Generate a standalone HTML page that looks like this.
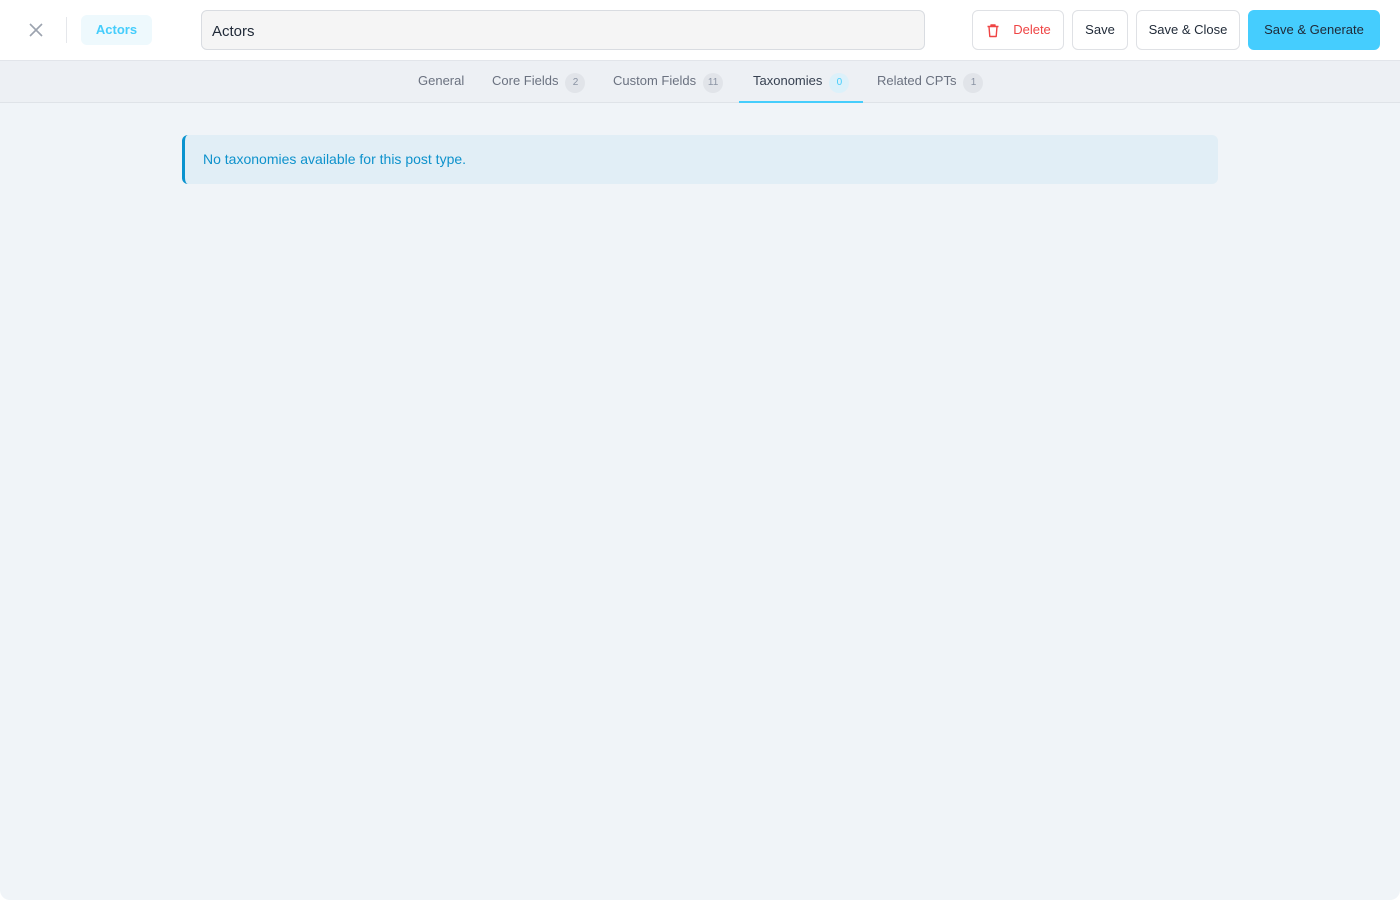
<!DOCTYPE html>
<html><head><meta charset="utf-8"><style>
*{box-sizing:border-box;margin:0;padding:0}
html,body{width:1400px;height:900px;background:#fff;font-family:"Liberation Sans",sans-serif;overflow:hidden}
.wrap{position:absolute;left:0;top:0;width:1400px;height:900px;background:#f0f4f8;border-radius:0 0 10px 10px;overflow:hidden}
.top{position:absolute;left:0;top:0;width:1400px;height:61px;background:#fff;border-bottom:1px solid #e2e5ea}
.x{position:absolute;left:27px;top:21px}
.sep{position:absolute;left:66px;top:17px;width:1px;height:26px;background:#e5e7eb}
.pill{position:absolute;left:81px;top:15px;width:71px;height:30px;border-radius:6px;background:#eef9fd;color:#45cdfc;font-weight:bold;font-size:13px;line-height:30px;text-align:center}
.inp{position:absolute;left:201px;top:10px;width:724px;height:40px;border:1px solid #d9dce1;border-radius:6px;background:#f5f5f5;font-size:15px;color:#1f2937;line-height:38px;padding-left:10px;padding-top:2px}
.btn{position:absolute;top:10px;height:40px;border:1px solid #dfe1e5;border-radius:6px;background:#fff;font-size:13px;color:#1f2937;line-height:38px;text-align:center}
.tabs{position:absolute;left:0;top:61px;width:1400px;height:42px;background:#edf0f4;border-bottom:1px solid #dfe3e8}
.tab{position:absolute;top:0;height:42px;line-height:40px;font-size:13px;color:#6b7280}
.b{display:inline-block;width:20px;height:20px;border-radius:10px;background:#e1e4e9;color:#8a93a3;font-size:10px;line-height:20px;text-align:center;margin-left:7px;vertical-align:0px}
.alert{position:absolute;left:182px;top:135px;width:1036px;height:49px;background:#e1eef6;border-left:3px solid #0a93cf;border-radius:6px;color:#0e92cc;font-size:14px;line-height:49px;padding-left:18px}
</style></head><body><div class="wrap">
<div class="top">
<svg class="x" width="18" height="18" viewBox="0 0 18 18"><path d="M3 3L15 15M15 3L3 15" stroke="#9ca3af" stroke-width="1.6" fill="none"/></svg>
<div class="sep"></div>
<div class="pill">Actors</div>
<div class="inp">Actors</div>
<div class="btn" style="left:972px;width:92px;color:#ef4444;padding-left:28px"><svg style="position:absolute;left:13px;top:12px" width="14" height="15" viewBox="0 0 14 15"><path d="M1.5 3.5h11M5 3.5V2h4v1.5M3 3.5l.8 10h6.4l.8-10" stroke="#ef4444" stroke-width="1.4" fill="none" stroke-linejoin="round"/></svg>Delete</div>
<div class="btn" style="left:1072px;width:56px">Save</div>
<div class="btn" style="left:1136px;width:104px">Save &amp; Close</div>
<div class="btn" style="left:1248px;width:132px;background:#45cdfe;border-color:#45cdfe">Save &amp; Generate</div>
</div>
<div class="tabs">
<div class="tab" style="left:418px">General</div>
<div class="tab" style="left:492px">Core Fields<span class="b">2</span></div>
<div class="tab" style="left:613px">Custom Fields<span class="b">11</span></div>
<div class="tab" style="left:739px;width:124px;padding-left:14px;color:#374151;border-bottom:2px solid #45cdfc">Taxonomies<span class="b" style="background:#dcf1fa;color:#45cdfc">0</span></div>
<div class="tab" style="left:877px">Related CPTs<span class="b">1</span></div>
</div>
<div class="alert">No taxonomies available for this post type.</div>
</div></body></html>
